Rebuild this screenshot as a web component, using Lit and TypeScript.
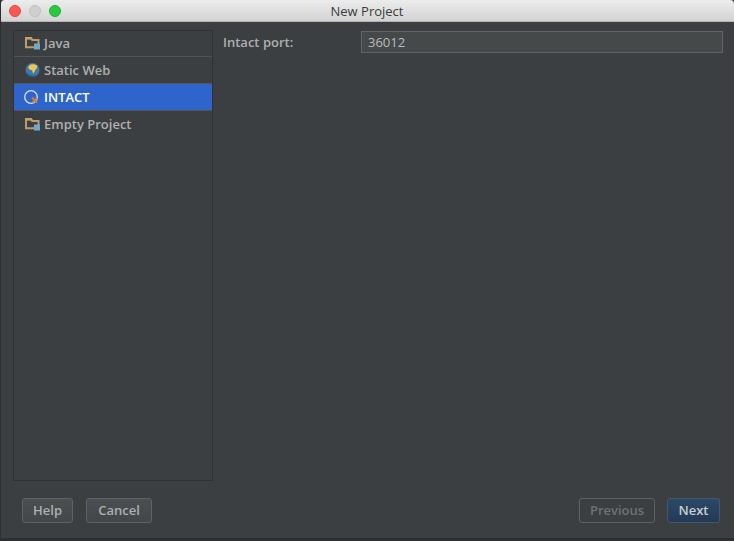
import { LitElement, html, css, svg } from "lit";
import { customElement } from "lit/decorators.js";

const folder = svg`<svg class="ico" width="16" height="16" viewBox="0 0 16 16">
  <path d="M1 3.2h5.2l1 1.8h6.3v7.2H1z" fill="none" stroke="#b99c68" stroke-width="2"/>
  <path d="M0 2h6.6l1.2 2.4H0z" fill="#c2a26c"/>
  <rect x="9" y="8.5" width="6" height="6" fill="#6fa8c9"/>
</svg>`;
const globe = svg`<svg class="ico" width="16" height="16" viewBox="0 0 16 16">
  <circle cx="7.5" cy="8" r="7" fill="#3f78ad"/>
  <path d="M4.5 3.2c2-1.4 5.8-1.2 7.5.6.6 1.5-.2 3-1.5 3.6-.5 1.4-1.2 3-2.3 4-.8-1-.8-2.4-1.2-3.4C5.5 8 3.5 7 3.2 5.4c.3-.9.7-1.6 1.3-2.2z" fill="#eec64f"/>
  <path d="M1.5 11c2 3 6 4 9 2.8" fill="none" stroke="#2c5b88" stroke-width="1.4"/>
</svg>`;
const intact = svg`<svg class="ico sm" width="16" height="16" viewBox="0 0 16 16">
  <circle cx="7" cy="8" r="6.3" fill="none" stroke="#d5e2f5" stroke-width="1.3"/>
  <path d="M8 8.5l5 5M13 9l-4.5 4.5" stroke="#c9803d" stroke-width="1.9"/>
</svg>`;

@customElement("app-root")
export class AppRoot extends LitElement {
  static styles = css`
    :host {
      display: block;
      width: 734px;
      height: 541px;
      overflow: hidden;
      background: #2e2f30;
      font-family: "Open Sans", "Noto Sans", sans-serif;
      font-size: 13px;
      color: #bbbbbb;
    }
    .window {
      height: 538px;
      margin-left: 1px;
      display: flex;
      flex-direction: column;
      background: #3c3f41;
    }
    .title {
      height: 22px;
      box-sizing: border-box;
      flex: none;
      display: flex;
      align-items: center;
      position: relative;
      justify-content: center;
      background: linear-gradient(#ececec, #d3d3d3);
      border-bottom: 1px solid #b4b4b4;
      color: #3b3b3b;
      font-size: 13px;
      padding: 1px 1px 0 0;
      border-radius: 4px 4px 0 0;
    }
    .lights {
      position: absolute;
      left: 8px;
      top: 5px;
      display: flex;
      gap: 8px;
    }
    .light {
      width: 12px;
      height: 12px;
      border-radius: 50%;
      box-sizing: border-box;
    }
    .red { background: #fc5753; border: 1px solid #df4744; }
    .grey { background: #cfcfcf; border: 1px solid #bfbfbf; }
    .green { background: #28c940; border: 1px solid #1fb030; }
    .main {
      flex: 1;
      display: flex;
      padding: 8px 11px 0 12px;
      gap: 10px;
      min-height: 0;
    }
    .list {
      width: 200px;
      height: 451px;
      box-sizing: border-box;
      border: 1px solid #2f3234;
      flex: none;
    }
    .row {
      height: 27px;
      box-sizing: border-box;
      display: flex;
      align-items: center;
      gap: 3px;
      padding-left: 11px;
      border-bottom: 1px solid #515557;
      font-size: 13px;
      line-height: 16px;
      font-weight: 600;
      color: #adafb0;
    }
    .row.first { height: 26px; padding-bottom: 1px; }
    .row.sel {
      background: #2f65ca;
      color: #ffffff;
      padding-left: 10px;
      gap: 4px;
    }
    .row.last { border-bottom: none; padding-bottom: 2px; }
    .ico { flex: none; }
    .form {
      flex: 1;
      height: 22px;
      margin-top: 1px;
      display: flex;
      align-items: center;
      min-width: 0;
    }
    .lbl { width: 138px; flex: none; font-weight: 600; color: #adafb0; }
    .field {
      flex: 1;
      height: 22px;
      box-sizing: border-box;
      background: #45494a;
      border: 1px solid #646464;
      padding-left: 6px;
      line-height: 20px;
      color: #bbbbbb;
    }
    .bottom {
      flex: none;
      display: flex;
      justify-content: space-between;
      padding: 17px 14px 15px 21px;
    }
    .group { display: flex; gap: 13px; }
    .btn {
      height: 25px;
      box-sizing: border-box;
      border: 1px solid #5e6264;
      border-radius: 3px;
      background: linear-gradient(#4a4e50, #43474a);
      display: flex;
      align-items: center;
      justify-content: center;
      padding-bottom: 1px;
      font-weight: 600;
      color: #adafb0;
    }
    .help { width: 51px; }
    .cancel { width: 66px; }
    .prev {
      width: 76px;
      background: none;
      border-color: #5c6062;
      color: #6f7274;
    }
    .group.right { gap: 12px; }
    .next {
      width: 53px;
      background: linear-gradient(#2d4968, #233a56);
      border-color: #42586f;
      color: #c9ced3;
    }
  `;

  render() {
    return html`<div class="window">
      <div class="title">
        <div class="lights">
          <div class="light red"></div>
          <div class="light grey"></div>
          <div class="light green"></div>
        </div>
        New Project
      </div>
      <div class="main">
        <div class="list">
          <div class="row first">${folder}<span>Java</span></div>
          <div class="row">${globe}<span>Static Web</span></div>
          <div class="row sel">${intact}<span>INTACT</span></div>
          <div class="row last">${folder}<span>Empty Project</span></div>
        </div>
        <div class="form">
          <div class="lbl">Intact port:</div>
          <div class="field">36012</div>
        </div>
      </div>
      <div class="bottom">
        <div class="group">
          <div class="btn help">Help</div>
          <div class="btn cancel">Cancel</div>
        </div>
        <div class="group right">
          <div class="btn prev">Previous</div>
          <div class="btn next">Next</div>
        </div>
      </div>
    </div>`;
  }
}
